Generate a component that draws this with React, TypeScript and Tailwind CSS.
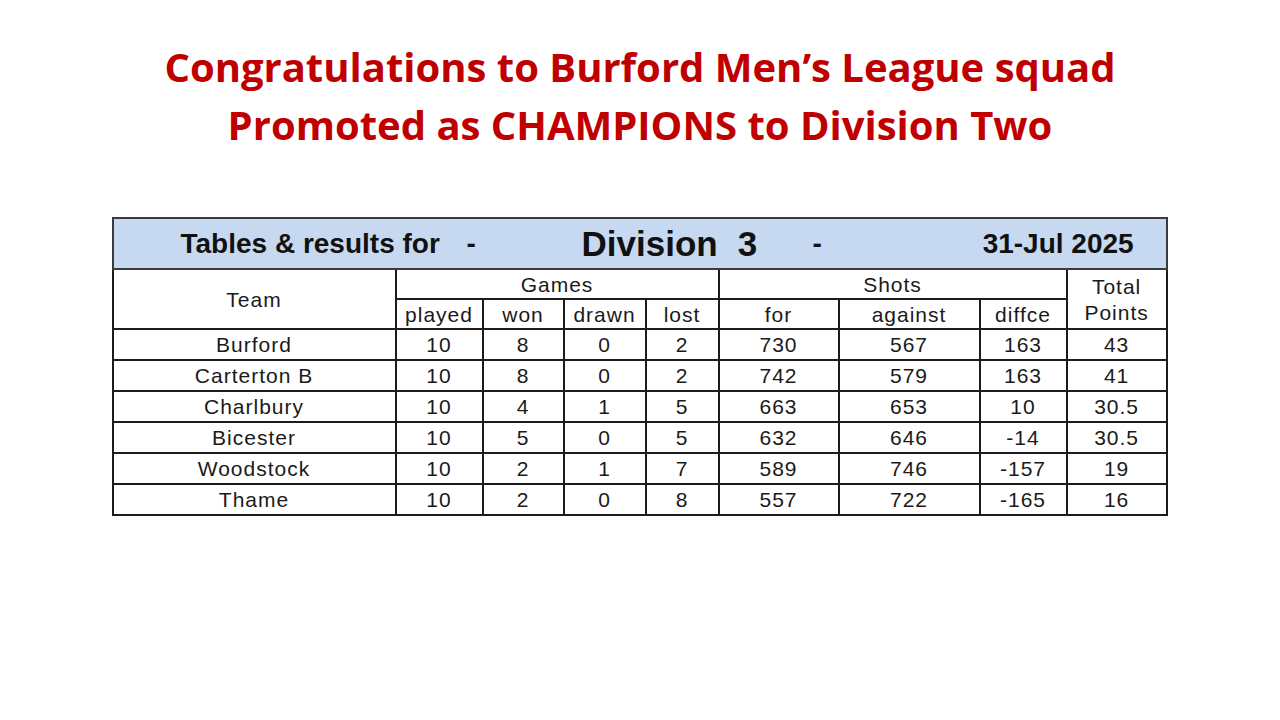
import React from "react";

const rows = [
  ["Burford", "10", "8", "0", "2", "730", "567", "163", "43"],
  ["Carterton B", "10", "8", "0", "2", "742", "579", "163", "41"],
  ["Charlbury", "10", "4", "1", "5", "663", "653", "10", "30.5"],
  ["Bicester", "10", "5", "0", "5", "632", "646", "-14", "30.5"],
  ["Woodstock", "10", "2", "1", "7", "589", "746", "-157", "19"],
  ["Thame", "10", "2", "0", "8", "557", "722", "-165", "16"],
];

const cell = "border-2 border-[#1c1c1c] text-center p-0 leading-none";

export default function App() {
  return (
    <div className="w-[1280px] h-[720px] bg-white flex flex-col items-center overflow-hidden">
      <div
        className="mt-[38px] text-center text-[#c00000] font-bold text-[40px] leading-[58px]"
        style={{ fontFamily: "'Open Sans', 'Noto Sans', sans-serif" }}
      >
        <div>Congratulations to Burford Men’s League squad</div>
        <div>Promoted as CHAMPIONS to Division Two</div>
      </div>

      <div className="mt-[63px] -ml-[3px] w-[1054px]" style={{ fontFamily: "'Liberation Sans', Arial, sans-serif" }}>
        <table className="w-[1054px] table-fixed border-collapse text-[21px] tracking-[1px] text-[#1a1a1a]">
          <colgroup>
            <col className="w-[283px]" />
            <col className="w-[87px]" />
            <col className="w-[81px]" />
            <col className="w-[82px]" />
            <col className="w-[73px]" />
            <col className="w-[120px]" />
            <col className="w-[141px]" />
            <col className="w-[87px]" />
            <col className="w-[100px]" />
          </colgroup>
          <tbody>
            <tr className="h-[51px]">
              <td colSpan={9} className="border-2 border-[#3a3a3a] bg-[#c6d9f0] p-0">
                <div className="flex items-center font-bold text-[#111] whitespace-nowrap tracking-normal">
                  <div className="w-[345px] pl-[67px] text-[28px]">Tables &amp; results for</div>
                  <div className="w-[30px] pl-[8px] text-[28px]">-</div>
                  <div className="w-[324px] pl-[93px] text-[35px] leading-none">
                    Division<span className="ml-[20px]">3</span>
                  </div>
                  <div className="w-[60px] text-[28px]">-</div>
                  <div className="flex-1 text-right pr-[32px] text-[28px]">31-Jul 2025</div>
                </div>
              </td>
            </tr>
            <tr className="h-[30px]">
              <td rowSpan={2} className={cell}>Team</td>
              <td colSpan={4} className={cell}>Games</td>
              <td colSpan={3} className={cell}>Shots</td>
              <td rowSpan={2} className="border-2 border-[#1c1c1c] text-center p-0">
                <div className="h-[28px] flex items-center justify-center pt-[4px]">Total</div>
                <div className="h-[28px] flex items-center justify-center">Points</div>
              </td>
            </tr>
            <tr className="h-[30px]">
              <td className={cell}>played</td>
              <td className={cell}>won</td>
              <td className={cell}>drawn</td>
              <td className={cell}>lost</td>
              <td className={cell}>for</td>
              <td className={cell}>against</td>
              <td className={cell}>diffce</td>
            </tr>
            {rows.map((r) => (
              <tr key={r[0]} className="h-[31px]">
                {r.map((v, i) => (
                  <td key={i} className={cell}>{v}</td>
                ))}
              </tr>
            ))}
          </tbody>
        </table>
      </div>
    </div>
  );
}
